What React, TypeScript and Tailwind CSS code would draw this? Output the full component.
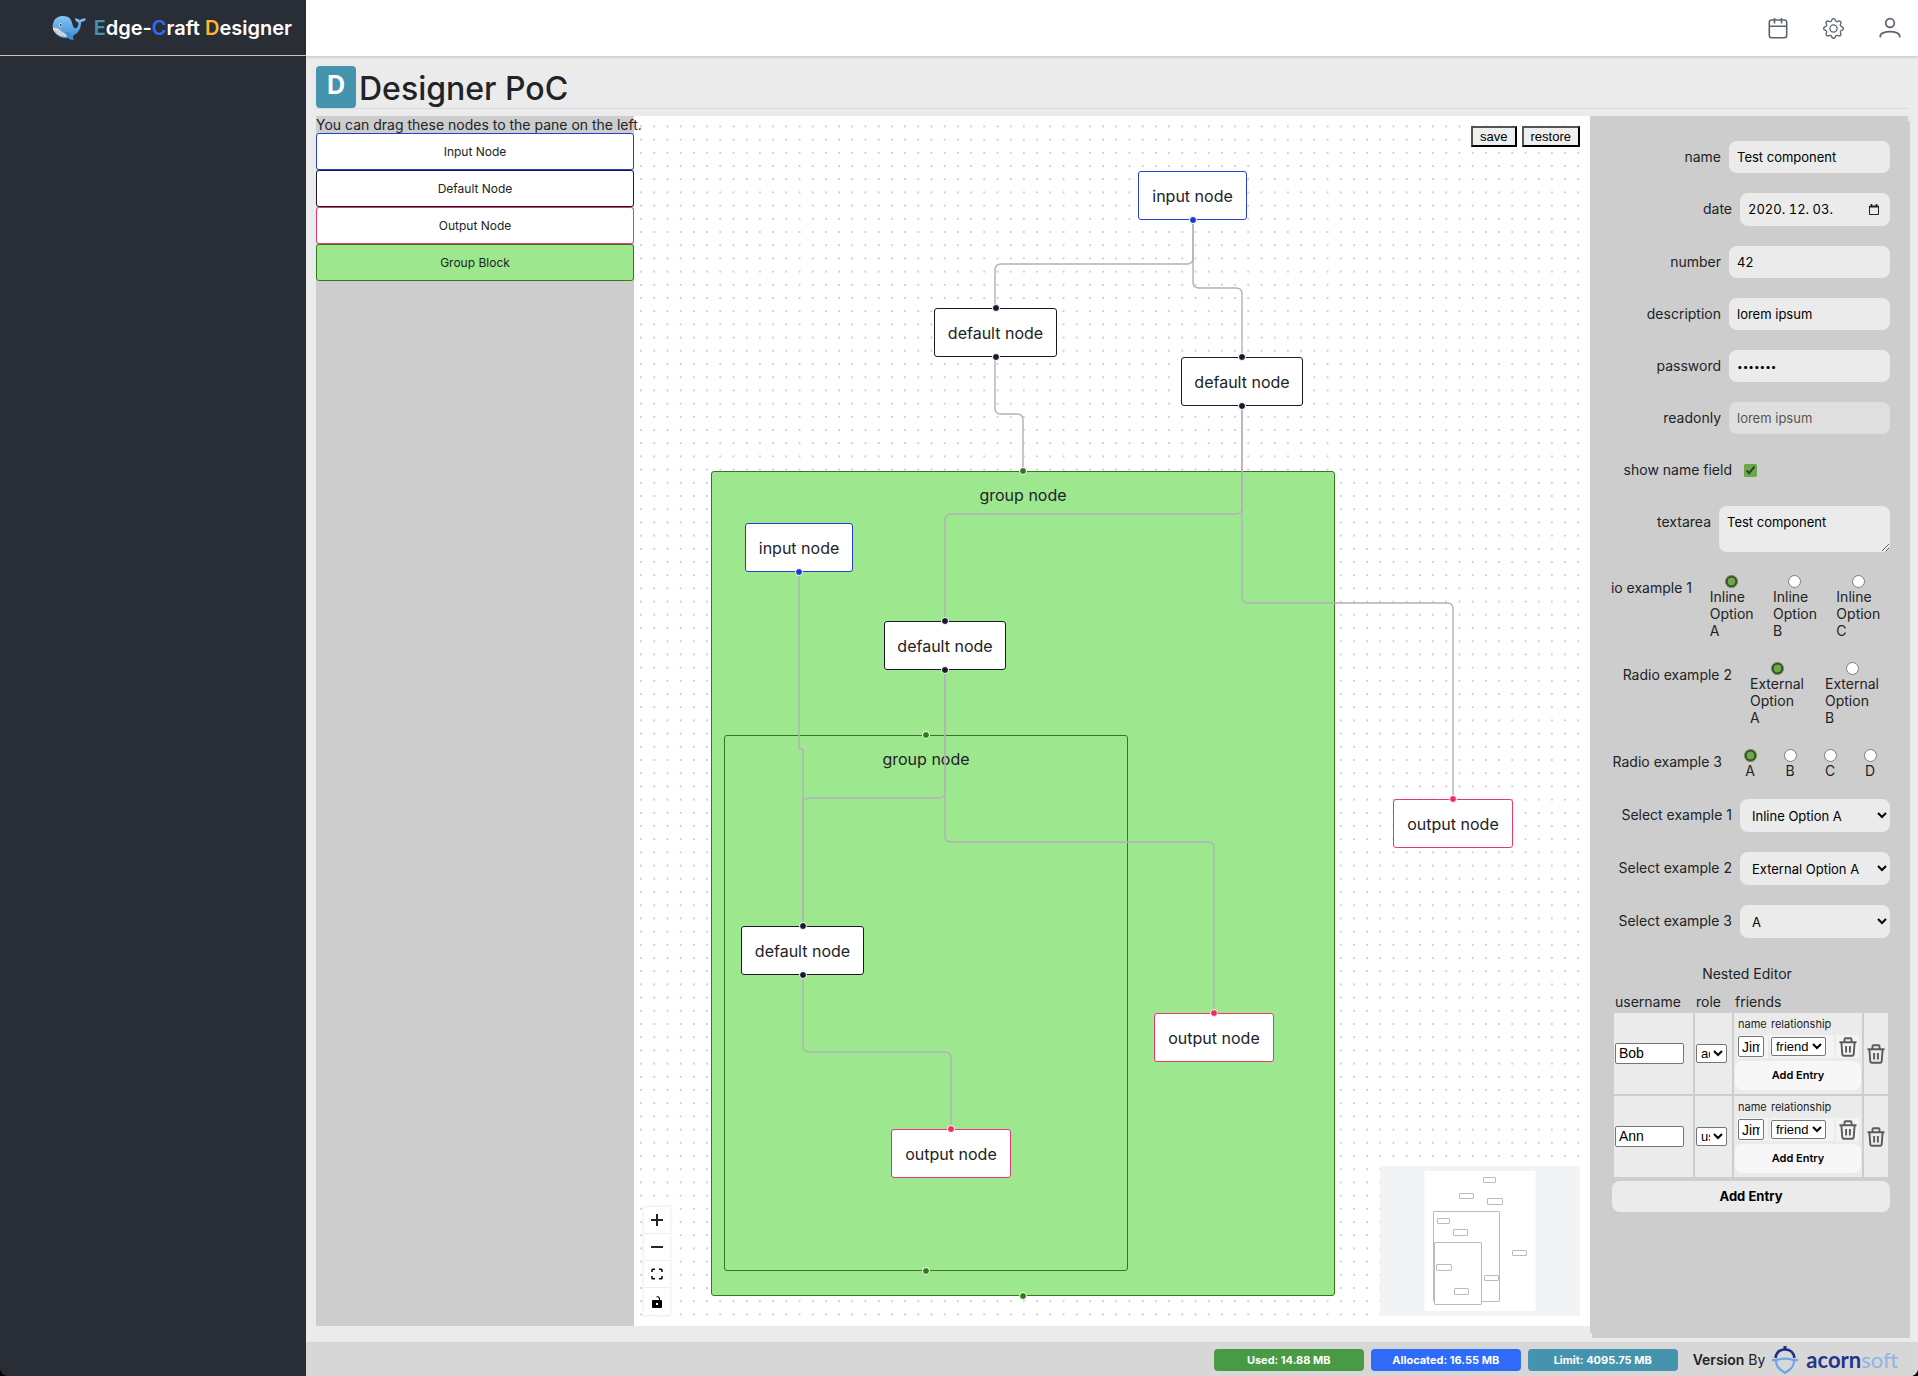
import { useId, type ReactNode } from "react";
import { BsGear } from "react-icons/bs";

function Whale() {
  return (
    <svg width="34" height="26" viewBox="0 0 34 26" aria-hidden="true">
      <defs>
        <linearGradient id="whaleBody" x1="0" y1="0" x2="0" y2="1">
          <stop offset="0" stopColor="#86c5f4" />
          <stop offset="1" stopColor="#3a86d0" />
        </linearGradient>
      </defs>
      <path
        d="M2 6C4 1 11 0 16 2c3 1 4 6 5 9 1 3 4 3 5 0 .6-2 .5-3 0-4-2 0-3-2-3-4 2 1 4 1 5 2 1-1 4-2 6-1-1 2-3 3-5 3 0 6-2 11-7 13l-1 1c0 1 0 3 1 4-3 0-5-1-6-2C9 24 3 20 1 14 0 11 1 8 2 6z"
        fill="url(#whaleBody)"
      />
      <path d="M1 13c3-1 6 0 9 4 2 1 4 2 5 5-6 0-11-3-13-6-1-1-1-2-1-3z" fill="#d9dcdf" />
      <path d="M3 15l2 3M6 15l2 5M9 17l2 4" stroke="#a9b0b8" strokeWidth=".6" fill="none" />
      <path d="M14 17c1 3 3 6 7 8-1-3-2-5-4-8z" fill="#3f8fd8" />
      <circle cx="8.500" cy="10" r="1.800" fill="#e8eef4" />
      <circle cx="8.700" cy="10" r="1" fill="#1d2b3c" />
    </svg>
  );
}

function CalendarIcon() {
  return (
    <svg width="20" height="22" viewBox="0 0 20 22" fill="none" stroke="currentColor" strokeWidth="1.600" aria-hidden="true">
      <rect x="1.300" y="3" width="17.400" height="17.700" rx="2.200" />
      <path d="M1.500 9.300h17M6.500 1v5.500M13.500 1v5.500" />
    </svg>
  );
}

function UserIcon() {
  return (
    <svg width="22" height="22" viewBox="0 0 22 22" fill="none" stroke="currentColor" strokeWidth="1.700" aria-hidden="true">
      <circle cx="11" cy="6" r="4.300" />
      <path d="M1.300 20.500v-1.500c0-2.500 4.400-4.400 9.700-4.400s9.700 1.900 9.700 4.400v1.500" />
    </svg>
  );
}

function TrashIcon() {
  return (
    <svg width="18" height="20" viewBox="0 0 18 20" fill="none" stroke="#5a5a5a" strokeWidth="1.900" aria-hidden="true">
      <path d="M.5 5.200h17M5.500 5V2.300c0-.7.400-1.100 1.100-1.100h4.800c.7 0 1.100.4 1.100 1.100V5M2.400 5.500l.9 11.800c.1 1 .6 1.500 1.600 1.500h8.200c1 0 1.500-.5 1.600-1.500l.9-11.800M7.100 9v6.500M10.900 9v6.500" />
    </svg>
  );
}

function AcornIcon() {
  return (
    <svg width="26" height="28" viewBox="0 0 26 28" fill="none" aria-hidden="true">
      <path d="M3.500 12c.8-5.500 4.500-8.500 9.500-8.500s8.700 3 9.500 8.500" stroke="#1f2f86" strokeWidth="2.600" />
      <path d="M13 0v4" stroke="#1f2f86" strokeWidth="3" />
      <path d="M0 14.200h3.500c2 0 3-1.500 9.500-1.500s7.500 1.500 9.500 1.500H26" stroke="#6fa5e6" strokeWidth="2.200" />
      <path d="M4 15c.3 5 2.500 7.500 5 9l4 3 4-3c2.500-1.500 4.700-4 5-9" stroke="#6fa5e6" strokeWidth="2.200" />
    </svg>
  );
}

const tones = {
  input: { border: "border-[#2440d0]", dot: "bg-[#1d36cf]" },
  default: { border: "border-[#1a192b]", dot: "bg-[#1a192b]" },
  output: { border: "border-[#e8386c]", dot: "bg-[#ee2e63]" },
  group: { border: "border-[#38761d]", dot: "bg-[#2f7a1c]" },
};
type Kind = keyof typeof tones;

const groups = [
  { x: 77, y: 355, w: 624, h: 825 },
  { x: 90, y: 619, w: 404, h: 536 },
];

const nodes: { kind: Kind; x: number; y: number; w: number }[] = [
  { kind: "input", x: 504, y: 55, w: 109 },
  { kind: "default", x: 300, y: 192, w: 123 },
  { kind: "default", x: 547, y: 241, w: 122 },
  { kind: "input", x: 111, y: 407, w: 108 },
  { kind: "default", x: 250, y: 505, w: 122 },
  { kind: "default", x: 107, y: 810, w: 123 },
  { kind: "output", x: 759, y: 683, w: 120 },
  { kind: "output", x: 520, y: 897, w: 120 },
  { kind: "output", x: 257, y: 1013, w: 120 },
];

/* [start x, start y, bend y, end x, end y] */
const edges = [
  [559, 104, 148, 361, 192],
  [559, 104, 172, 608, 241],
  [361, 241, 298, 389, 355],
  [608, 290, 398, 311, 505],
  [608, 290, 487, 819, 684],
  [165, 456, 633, 169, 811],
  [311, 554, 682, 169, 811],
  [311, 554, 726, 580, 898],
  [169, 859, 936, 317, 1013],
];

function edgePath([x1, y1, my, x2, y2]: number[]) {
  const dir = x2 > x1 ? 1 : -1;
  const r = Math.min(6, Math.abs(x2 - x1) / 2);
  return `M${x1} ${y1}V${my - r}Q${x1} ${my} ${x1 + dir * r} ${my}H${x2 - dir * r}Q${x2} ${my} ${x2} ${my + r}V${y2}`;
}

function Handle({ kind, side }: { kind: Kind; side: "top" | "bottom" }) {
  return (
    <span
      className={`absolute left-1/2 size-2 -translate-x-1/2 rounded-full border border-white ${
        side === "top" ? "-top-[5px]" : "-bottom-[5px]"
      } ${tones[kind].dot}`}
    />
  );
}

const miniNodes = [
  [53, 45, 66, 90],
  [54, 76, 47, 62],
  [103, 11, 12, 5],
  [79, 27, 14, 5],
  [107, 32, 15, 6],
  [57, 52, 12, 5],
  [73, 63, 14, 6],
  [132, 84, 14, 5],
  [56, 98, 15, 6],
  [104, 109, 14, 5],
  [74, 122, 14, 6],
];

function FlowCanvas() {
  return (
    <section aria-label="Diagram" className="relative mb-4 min-h-[1200px] overflow-hidden bg-white">
      <svg className="absolute inset-0 size-full" aria-hidden="true">
        <pattern id="dots" width="13.200" height="13.200" x="0.500" y="3.800" patternUnits="userSpaceOnUse">
          <circle cx="6.600" cy="6.600" r=".65" fill="#77777f" />
        </pattern>
        <rect width="100%" height="100%" fill="url(#dots)" />
      </svg>
      {groups.map((g) => (
        <div
          key={g.y}
          className="absolute rounded-[3px] border border-[#38761d] bg-[#9de88f] pt-[11px] text-center text-base leading-6"
          style={{ left: g.x, top: g.y, width: g.w, height: g.h }}
        >
          group node
          <Handle kind="group" side="bottom" />
        </div>
      ))}
      <svg className="absolute inset-0 size-full" fill="none" stroke="#b1b1b7" strokeWidth="1.400" aria-hidden="true">
        {edges.map((e, i) => (
          <path key={i} d={edgePath(e)} />
        ))}
      </svg>
      {groups.map((g) => (
        <div key={g.y} className="absolute" style={{ left: g.x, top: g.y, width: g.w }}>
          <span className="absolute -top-1 left-1/2 size-2 -translate-x-1/2 rounded-full border border-white bg-[#2f7a1c]" />
        </div>
      ))}
      {nodes.map((n) => (
        <div
          key={`${n.x}-${n.y}`}
          className={`absolute flex h-[49px] items-center justify-center rounded-[3px] border bg-white text-base leading-6 ${tones[n.kind].border}`}
          style={{ left: n.x, top: n.y, width: n.w }}
        >
          {n.kind} node
          {n.kind !== "input" && <Handle kind={n.kind} side="top" />}
          {n.kind !== "output" && <Handle kind={n.kind} side="bottom" />}
        </div>
      ))}

      <div className="absolute top-[10px] right-[10px] flex gap-[5px] font-['Liberation_Sans',sans-serif] text-[13px] leading-[17px] text-black">
        <button className="border-2 border-black bg-[#efefef] px-[7px] [border-style:outset]">save</button>
        <button className="border-2 border-black bg-[#efefef] px-[7px] [border-style:outset]">restore</button>
      </div>

      <div className="absolute bottom-[11px] left-[10px] flex flex-col divide-y divide-[#eeeeee] shadow-[0_0_2px_1px_rgba(0,0,0,0.08)]">
        <button aria-label="zoom in" className="grid h-[27px] w-[26px] place-items-center bg-white">
          <svg width="12" height="12" viewBox="0 0 12 12" stroke="#222" strokeWidth="2"><path d="M6 0v12M0 6h12" /></svg>
        </button>
        <button aria-label="zoom out" className="grid h-[27px] w-[26px] place-items-center bg-white">
          <svg width="12" height="12" viewBox="0 0 12 12" stroke="#000" strokeWidth="1.700"><path d="M0 6h12" /></svg>
        </button>
        <button aria-label="fit view" className="grid h-[27px] w-[26px] place-items-center bg-white">
          <svg width="12" height="12" viewBox="0 0 12 12" fill="none" stroke="#000" strokeWidth="1.500"><path d="M1 4V2q0-.8.800-.8H4M8 1.200h2.200q.8 0 .8.800v2M11 8v2q0 .8-.8.800H8M4 10.800H1.800Q1 10.800 1 10V8" /></svg>
        </button>
        <button aria-label="toggle interactivity" className="grid h-[27px] w-[26px] place-items-center bg-white">
          <svg width="12" height="12" viewBox="0 0 12 12"><path d="M5.500 1C8 0 8.700 2 8.500 4" fill="none" stroke="#000" strokeWidth="1.100" /><path d="M2 4h8q1 0 1 1v6q0 1-1 1H2q-1 0-1-1V5q0-1 1-1zM5 7v2h2V7z" fillRule="evenodd" /></svg>
        </button>
      </div>

      <svg className="absolute right-[10px] bottom-[10px] bg-[#f2f3f5]" width="200" height="150" role="img" aria-label="Mini map">
        <rect x="44.500" y="5" width="111" height="140" fill="#fff" />
        {miniNodes.map(([x, y, w, h]) => (
          <rect key={`${x}-${y}`} x={x + 0.5} y={y + 0.5} width={w} height={h} rx="0.500" fill="#fff" stroke="#bbb" />
        ))}
      </svg>
    </section>
  );
}

function Palette() {
  const items = [
    { label: "Input Node", cls: "border-[#2440d0] bg-white" },
    { label: "Default Node", cls: "border-[#1a192b] bg-white" },
    { label: "Output Node", cls: "border-[#e8386c] bg-white" },
    { label: "Group Block", cls: "border-[#38761d] bg-[#9de88f]" },
  ];
  return (
    <aside className="relative z-10 mb-4 bg-[#cdcdcd] text-center">
      <p className="text-[14px] leading-[17px] whitespace-nowrap">You can drag these nodes to the pane on the left.</p>
      {items.map((i) => (
        <div key={i.label} draggable className={`h-[37px] rounded-[3px] border text-[12px] leading-[35px] ${i.cls}`}>
          {i.label}
        </div>
      ))}
    </aside>
  );
}

const field = "rounded-lg bg-[#ebebeb] px-2 text-[13px] text-black";

function Row({ label, children }: { label: string; children: (id: string) => ReactNode }) {
  const id = useId();
  return (
    <div className="flex items-start justify-end gap-2">
      <label htmlFor={id} className="shrink-0 leading-8 whitespace-nowrap">{label}</label>
      {children(id)}
    </div>
  );
}

function RadioRow({ label, options, boxClass }: { label: string; options: string[]; boxClass: string }) {
  const name = useId();
  return (
    <fieldset className="flex min-w-0 items-start justify-end gap-2">
      <span className="shrink-0 leading-8 whitespace-nowrap">{label}</span>
      <div className={`flex shrink-0 ${boxClass}`}>
        {options.map((o, i) => (
          <label key={o} className="flex min-w-0 flex-1 flex-col items-center px-[10px] leading-[17px]">
            <input type="radio" name={name} defaultChecked={i === 0} className="mt-[3px] size-[13px] accent-[#6aa945]" />
            <span>{o}</span>
          </label>
        ))}
      </div>
    </fieldset>
  );
}

function SelectRow({ label, value }: { label: string; value: string }) {
  return (
    <Row label={label}>
      {(id) => (
        <select id={id} className="h-[33px] w-[150px] rounded-lg bg-[#ebebeb] px-2 text-[13px] text-black">
          <option>{value}</option>
        </select>
      )}
    </Row>
  );
}

const boxed = "rounded-[2px] border border-[#767676] bg-white font-['Liberation_Sans',sans-serif] text-black";

function NestedEditor() {
  const rows = [
    { user: "Bob", role: "admin" },
    { user: "Ann", role: "user" },
  ];
  return (
    <div>
      <h2 className="pr-2 text-center leading-8">Nested Editor</h2>
      <table className="w-full table-fixed border-separate border-spacing-[2px] text-left">
        <colgroup>
          <col className="w-[79px]" />
          <col className="w-[37px]" />
          <col />
          <col className="w-6" />
        </colgroup>
        <thead>
          <tr className="leading-[19px]">
            <th className="px-px font-normal">username</th>
            <th className="px-px font-normal">role</th>
            <th className="px-px font-normal">friends</th>
            <td />
          </tr>
        </thead>
        <tbody>
          {rows.map((r) => (
            <tr key={r.user} className="h-[81px] bg-[#ebebeb]">
              <td className="px-px">
                <input aria-label="username" defaultValue={r.user} className={`${boxed} block h-[21px] w-[69px] px-[3px] text-[14px]`} />
              </td>
              <td className="px-px">
                <select aria-label="role" className={`${boxed} block h-[19px] w-[31px] text-[13px]`}>
                  <option>{r.role}</option>
                </select>
              </td>
              <td className="px-px align-top">
                <table className="w-full table-fixed border-separate border-spacing-[2px] text-[11px] leading-[15px]">
                  <colgroup>
                    <col className="w-[31px]" />
                    <col className="w-16" />
                    <col className="w-[23px]" />
                  </colgroup>
                  <thead>
                    <tr>
                      <th className="px-px pt-0.5 pb-px font-normal">name</th>
                      <th className="px-px pt-0.5 pb-px font-normal">relationship</th>
                      <td />
                    </tr>
                  </thead>
                  <tbody>
                    <tr className="h-[23px] bg-[#f4f4f4]">
                      <td className="px-px align-middle">
                        <input aria-label="friend name" defaultValue="Jim" className={`${boxed} block h-[21px] w-[26px] px-[3px] text-[14px]`} />
                      </td>
                      <td className="px-px">
                        <select aria-label="relationship" className={`${boxed} block h-[19px] w-[55px] text-[13px]`}>
                          <option>friend</option>
                        </select>
                      </td>
                      <td>
                        <button aria-label="remove friend" className="mx-auto block"><TrashIcon /></button>
                      </td>
                    </tr>
                  </tbody>
                </table>
                <button className="mt-px block h-[29px] w-full rounded-lg bg-[#f7f7f7] text-[11px] font-semibold text-black">Add Entry</button>
              </td>
              <td>
                <button aria-label="remove user" className="mx-auto block"><TrashIcon /></button>
              </td>
            </tr>
          ))}
        </tbody>
      </table>
      <button className="mt-0.5 block h-[31px] w-full rounded-lg bg-[#ebebeb] text-[13px] font-bold text-black">Add Entry</button>
    </div>
  );
}

function Properties() {
  return (
    <aside className="mb-[9px] bg-[#cdcdcd]">
      <form className="mt-[5px] -mr-0.5 -mb-[5px] ml-0.5 flex h-full flex-col gap-5 bg-[#cdcdcd] p-5 text-[14px]">
        <Row label="name">{(id) => <input id={id} defaultValue="Test component" className={`${field} h-8 w-[161px]`} />}</Row>
        <Row label="date">
          {(id) => (
            <div className="flex h-[33px] w-[150px] items-center rounded-lg bg-[#ebebeb] pr-[10px]">
              <input id={id} defaultValue="2020. 12. 03." className={`${field} min-w-0 flex-1 tabular-nums`} />
              <svg width="12" height="12" viewBox="0 0 12 12" fill="none" stroke="#222" aria-hidden="true">
                <path d="M1.500 2h9v8.500h-9z" strokeWidth="1" />
                <path d="M1 2.800h10M3.500 0v2M8.500 0v2" strokeWidth="1.600" />
              </svg>
            </div>
          )}
        </Row>
        <Row label="number">{(id) => <input id={id} inputMode="numeric" defaultValue="42" className={`${field} h-8 w-[161px]`} />}</Row>
        <Row label="description">{(id) => <input id={id} defaultValue="lorem ipsum" className={`${field} h-8 w-[161px]`} />}</Row>
        <Row label="password">
          {(id) => <input id={id} type="password" defaultValue="1234567" className="h-8 w-[161px] rounded-lg bg-[#ebebeb] px-2 text-[10px] text-black" />}
        </Row>
        <Row label="readonly">{(id) => <input id={id} readOnly value="lorem ipsum" className={`${field} h-8 w-[161px] opacity-60`} />}</Row>
        <Row label="show name field">
          {(id) => (
            <div className="flex h-8 w-[150px] items-center pl-1">
              <input id={id} type="checkbox" defaultChecked className="size-[13px] accent-[#6aa945]" />
            </div>
          )}
        </Row>
        <Row label="textarea">
          {(id) => <textarea id={id} defaultValue="Test component" className={`${field} h-[46px] w-[171px] py-2 leading-4`} />}
        </Row>
        <RadioRow label="io example 1" options={["Inline Option A", "Inline Option B", "Inline Option C"]} boxClass="w-[190px]" />
        <RadioRow label="Radio example 2" options={["External Option A", "External Option B"]} boxClass="w-[150px]" />
        <RadioRow label="Radio example 3" options={["A", "B", "C", "D"]} boxClass="w-[160px]" />
        <SelectRow label="Select example 1" value="Inline Option A" />
        <SelectRow label="Select example 2" value="External Option A" />
        <SelectRow label="Select example 3" value="A" />
        <NestedEditor />
      </form>
    </aside>
  );
}

function Footer() {
  const badge = "w-[150px] rounded-[4px] text-center text-[11px] leading-[22px] font-bold text-white";
  return (
    <footer className="flex h-[34px] items-center justify-end gap-[7px] border-t border-[#d3d5dc] bg-[#d7d7d7] pr-5">
      <span className={`${badge} bg-[#499a45]`}>Used: 14.88 MB</span>
      <span className={`${badge} bg-[#2e6bf8]`}>Allocated: 16.55 MB</span>
      <span className={`${badge} bg-[#4494ae]`}>Limit: 4095.75 MB</span>
      <span className="ml-2 text-[14px]"><b className="font-semibold">Version</b> By</span>
      <a href="#acornsoft" className="flex items-center gap-2">
        <AcornIcon />
        <span className="font-['Lato',sans-serif] text-[22px] leading-7 font-bold text-[#24348c]">
          acorn<span className="font-normal text-[#8db4e6]">soft</span>
        </span>
      </a>
    </footer>
  );
}

export default function App() {
  return (
    <div className="bg-black font-['Inter',sans-serif] text-[#212326]">
      <div className="flex min-h-screen overflow-hidden rounded-b-lg">
        <nav className="w-[306px] shrink-0 bg-[#292d36]">
          <div className="flex h-14 items-center justify-end gap-2 border-b border-[#c4c6c9] pr-[14px] text-[20px] font-semibold text-white">
            <Whale />
            <a href="#home" className="whitespace-nowrap">
              <span className="text-[#4494ae]">E</span>dge-<span className="text-[#2e6bf8]">C</span>raft{" "}
              <span className="text-[#fbb932]">D</span>esigner
            </a>
          </div>
        </nav>
        <div className="flex min-w-0 flex-1 flex-col bg-[#ebebeb]">
          <header className="z-10 flex h-14 shrink-0 items-center justify-end gap-[35px] bg-white pr-[17px] text-[#5d6470] shadow-[0_1px_3px_rgba(0,0,0,0.18)]">
            <button aria-label="Calendar"><CalendarIcon /></button>
            <button aria-label="Settings"><BsGear size={21} /></button>
            <button aria-label="Account"><UserIcon /></button>
          </header>
          <main className="flex flex-1 flex-col px-[10px] pt-[10px]">
            <div className="mb-[7px] flex h-[43px] items-start gap-[3px] border-b border-[#d8dae0]">
              <span className="h-[42px] w-10 rounded-[4px] bg-[#4494ae] text-center text-[25px] leading-[38px] font-bold text-white">D</span>
              <h1 className="text-[32px] leading-[45px] font-medium">Designer PoC</h1>
            </div>
            <div className="grid flex-1 grid-cols-[318px_minmax(0,1fr)_318px]">
              <Palette />
              <FlowCanvas />
              <Properties />
            </div>
          </main>
          <Footer />
        </div>
      </div>
    </div>
  );
}
